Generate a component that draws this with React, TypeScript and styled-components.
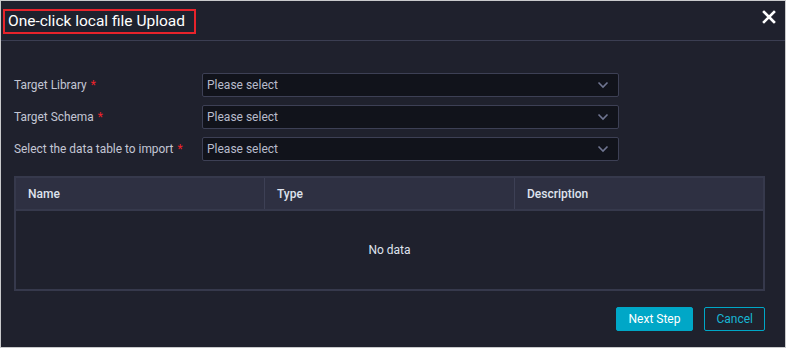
import React from "react";
import styled, { createGlobalStyle } from "styled-components";

const Global = createGlobalStyle`
  html, body { margin: 0; padding: 0; background: #ffffff; }
  * { box-sizing: border-box; }
`;

const Dialog = styled.div`
  width: 786px;
  height: 348px;
  background: #1f212d;
  border: 1px solid #c9cacc;
  font-family: Roboto, "Noto Sans", sans-serif;
  display: flex;
  flex-direction: column;
`;

const Header = styled.div`
  height: 40px;
  display: flex;
  align-items: center;
  justify-content: space-between;
  padding: 0 8px 0 2px;
  border-bottom: 1px solid #3b3e52;
`;

const Title = styled.div`
  border: 2px solid #e8232b;
  height: 25px;
  padding: 0 9px 0 3px;
  display: flex;
  align-items: center;
  color: #ffffff;
  font-size: 15.5px;
  margin-top: 1px;
`;

const Close = styled.button`
  background: none;
  border: none;
  padding: 0;
  width: 16px;
  height: 16px;
  display: flex;
  align-items: center;
  justify-content: center;
  cursor: pointer;
  margin-top: -7px;
`;

const Body = styled.div`
  padding: 32px 20px 0 13px;
  display: flex;
  flex-direction: column;
`;

const Form = styled.div`
  display: flex;
  flex-direction: column;
  gap: 8px;
`;

const Row = styled.div`
  display: flex;
  align-items: center;
  height: 24px;
`;

const Label = styled.div`
  width: 188px;
  color: #c3c6d4;
  font-size: 11.9px;
`;

const Star = styled.span`
  color: #f0232b;
  margin-left: 4px;
`;

const Select = styled.div`
  width: 417px;
  height: 24px;
  background: #11131b;
  border: 1px solid #3d4055;
  border-radius: 2px;
  display: flex;
  align-items: center;
  justify-content: space-between;
  padding: 0 9px 0 4px;
  color: #b8bccb;
  font-size: 12px;
`;

const Table = styled.div`
  margin-top: 15px;
  width: 751px;
  border: 2px solid #36394c;
  display: flex;
  flex-direction: column;
`;

const HeadRow = styled.div`
  display: grid;
  grid-template-columns: 248px 250px 1fr;
  height: 33px;
  background: #2e3042;
  border-bottom: 2px solid #36394c;
`;

const HeadCell = styled.div<{ $divider?: boolean }>`
  display: flex;
  align-items: center;
  padding-left: 12px;
  color: #dfe3ee;
  font-size: 12px;
  font-weight: 500;
  border-left: ${(p) => (p.$divider ? "1px solid #3d4055" : "none")};
`;

const Empty = styled.div`
  height: 78px;
  display: flex;
  align-items: center;
  justify-content: center;
  color: #dfe3ee;
  font-size: 12px;
`;

const Footer = styled.div`
  display: flex;
  justify-content: flex-end;
  gap: 11px;
  padding-top: 16px;
`;

const Button = styled.button<{ $primary?: boolean }>`
  height: 24px;
  padding: 0 ${(p) => (p.$primary ? "12px" : "11px")};
  font-family: Roboto, "Noto Sans", sans-serif;
  font-size: 12px;
  border-radius: 2px;
  border: 1px solid #00a7c7;
  background: ${(p) => (p.$primary ? "#00a7c7" : "transparent")};
  color: ${(p) => (p.$primary ? "#ffffff" : "#17b5d3")};
  cursor: pointer;
`;

const Chevron = () => (
  <svg width="12" height="8" viewBox="0 0 12 8">
    <path d="M1.5 1.5 L6 6 L10.5 1.5" fill="none" stroke="#6f7591" strokeWidth="1.6" />
  </svg>
);

const fields = ["Target Library", "Target Schema", "Select the data table to import"];

export default function App() {
  return (
    <>
      <Global />
      <Dialog>
        <Header>
          <Title>One-click local file Upload</Title>
          <Close aria-label="close">
            <svg width="14" height="14" viewBox="0 0 14 14">
              <path d="M2 2 L12 12 M12 2 L2 12" stroke="#ffffff" strokeWidth="2.6" strokeLinecap="square" />
            </svg>
          </Close>
        </Header>
        <Body>
          <Form>
            {fields.map((f) => (
              <Row key={f}>
                <Label>
                  {f}
                  <Star>*</Star>
                </Label>
                <Select>
                  <span>Please select</span>
                  <Chevron />
                </Select>
              </Row>
            ))}
          </Form>
          <Table>
            <HeadRow>
              <HeadCell>Name</HeadCell>
              <HeadCell $divider>Type</HeadCell>
              <HeadCell $divider>Description</HeadCell>
            </HeadRow>
            <Empty>No data</Empty>
          </Table>
          <Footer>
            <Button $primary>Next Step</Button>
            <Button>Cancel</Button>
          </Footer>
        </Body>
      </Dialog>
    </>
  );
}
